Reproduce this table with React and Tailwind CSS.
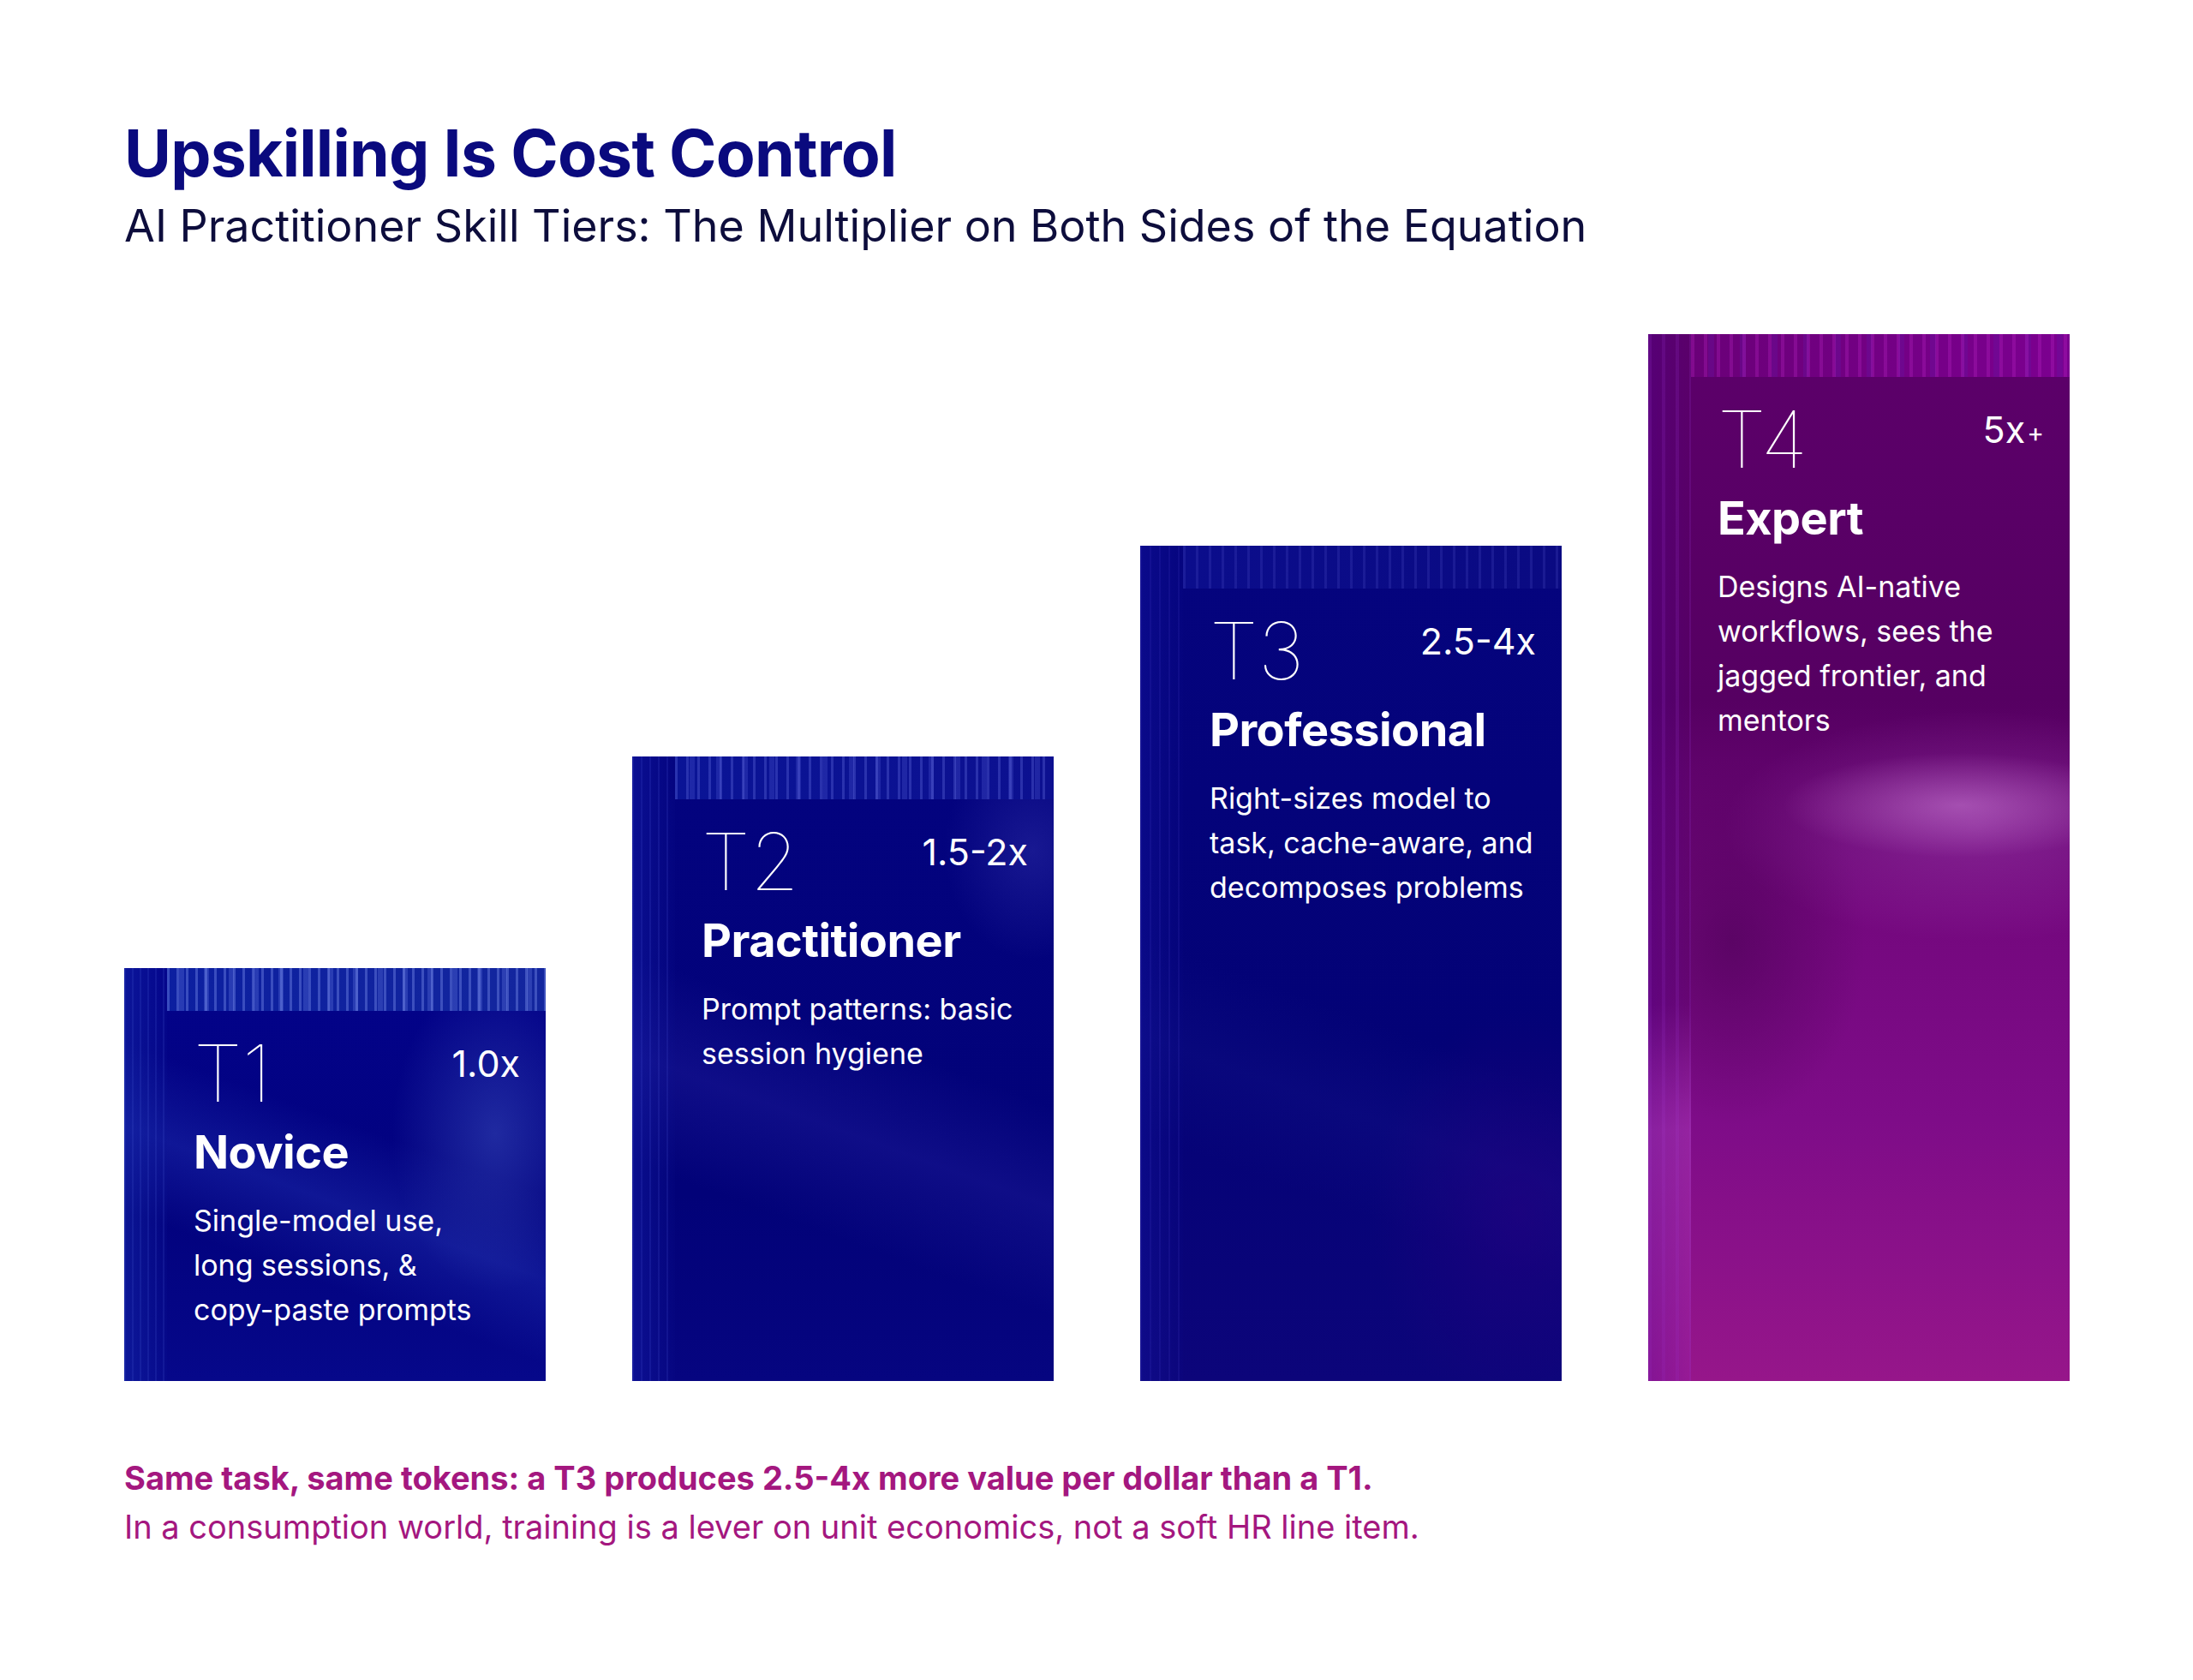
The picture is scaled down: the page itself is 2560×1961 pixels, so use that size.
import React from "react";

const tiers = [
  {
    id: "T1",
    mult: "1.0x",
    name: "Novice",
    lines: ["Single-model use,", "long sessions, &", "copy-paste prompts"],
    height: "h-[482px]",
    bg: "bg-[image:radial-gradient(ellipse_35%_55%_at_88%_40%,rgba(60,80,190,0.5),transparent_70%),linear-gradient(200deg,transparent_40%,rgba(40,60,190,0.35)_55%,transparent_70%),linear-gradient(180deg,#03038a_0%,#02027e_60%,#06088a_100%)]",
    band: "bg-[image:repeating-linear-gradient(90deg,rgba(150,170,255,0.32)_0px,rgba(150,170,255,0.32)_3px,transparent_3px,transparent_11px),repeating-linear-gradient(90deg,transparent_0px,transparent_14px,rgba(120,140,240,0.25)_14px,rgba(120,140,240,0.25)_20px,transparent_20px,transparent_29px),linear-gradient(90deg,#0c1fa0,#13269e)]",
    strip: "bg-[image:repeating-linear-gradient(90deg,rgba(70,90,210,0.18)_0px,rgba(70,90,210,0.18)_2px,transparent_2px,transparent_9px),linear-gradient(90deg,rgba(20,40,170,0.5),rgba(10,20,150,0.15))]",
  },
  {
    id: "T2",
    mult: "1.5-2x",
    name: "Practitioner",
    lines: ["Prompt patterns: basic", "session hygiene"],
    height: "h-[729px]",
    bg: "bg-[image:radial-gradient(ellipse_30%_25%_at_95%_15%,rgba(50,50,170,0.45),transparent_70%),linear-gradient(200deg,transparent_45%,rgba(45,40,170,0.3)_58%,transparent_72%),linear-gradient(180deg,#03037f_0%,#020278_70%,#060580_100%)]",
    band: "bg-[image:repeating-linear-gradient(90deg,rgba(120,130,240,0.28)_0px,rgba(120,130,240,0.28)_3px,transparent_3px,transparent_13px),repeating-linear-gradient(90deg,transparent_0px,transparent_17px,rgba(90,100,220,0.25)_17px,rgba(90,100,220,0.25)_23px,transparent_23px,transparent_31px),linear-gradient(90deg,#0a1496,#0c1090)]",
    strip: "bg-[image:repeating-linear-gradient(90deg,rgba(70,80,210,0.18)_0px,rgba(70,80,210,0.18)_2px,transparent_2px,transparent_10px),linear-gradient(90deg,rgba(20,30,170,0.45),rgba(10,15,140,0.1))]",
  },
  {
    id: "T3",
    mult: "2.5-4x",
    name: "Professional",
    lines: ["Right-sizes model to", "task, cache-aware, and", "decomposes problems"],
    height: "h-[975px]",
    bg: "bg-[image:radial-gradient(ellipse_50%_35%_at_90%_80%,rgba(40,0,130,0.55),transparent_70%),linear-gradient(200deg,transparent_55%,rgba(30,30,150,0.2)_65%,transparent_75%),linear-gradient(180deg,#05047e_0%,#030276_60%,#0c057a_100%)]",
    band: "bg-[image:repeating-linear-gradient(90deg,rgba(90,90,210,0.2)_0px,rgba(90,90,210,0.2)_3px,transparent_3px,transparent_15px),linear-gradient(90deg,#0b0d8c,#0a0a82)]",
    strip: "bg-[image:repeating-linear-gradient(90deg,rgba(70,60,200,0.15)_0px,rgba(70,60,200,0.15)_2px,transparent_2px,transparent_11px),linear-gradient(90deg,rgba(20,20,160,0.4),rgba(10,10,140,0.1))]",
  },
  {
    id: "T4",
    mult: "5x",
    plus: true,
    name: "Expert",
    lines: ["Designs AI-native", "workflows, sees the", "jagged frontier, and", "mentors"],
    height: "h-[1222px]",
    bg: "bg-[image:radial-gradient(ellipse_42%_5%_at_74%_45%,rgba(215,140,225,0.45),transparent_100%),radial-gradient(ellipse_60%_11%_at_78%_47%,rgba(180,90,200,0.35),transparent_100%),radial-gradient(ellipse_45%_25%_at_20%_58%,rgba(70,0,80,0.55),transparent_70%),linear-gradient(180deg,#5c006a_0%,#560062_35%,#74087e_55%,#7e0c88_75%,#96168a_100%)]",
    band: "bg-[image:repeating-linear-gradient(90deg,rgba(190,40,200,0.28)_0px,rgba(190,40,200,0.28)_4px,transparent_4px,transparent_15px),repeating-linear-gradient(90deg,transparent_0px,transparent_20px,rgba(100,20,160,0.35)_20px,rgba(100,20,160,0.35)_27px,transparent_27px,transparent_37px),linear-gradient(90deg,#6a0078,#7c0090)]",
    strip: "bg-[image:linear-gradient(180deg,transparent_0%,transparent_64%,rgba(200,80,210,0.35)_76%,rgba(170,40,180,0.3)_100%),repeating-linear-gradient(90deg,rgba(140,40,190,0.22)_0px,rgba(140,40,190,0.22)_4px,transparent_4px,transparent_16px),linear-gradient(90deg,rgba(80,0,130,0.5),rgba(80,0,110,0.1))]",
  },
];

function TierCard({ tier }) {
  return (
    <div className={`w-[492px] ${tier.height} ${tier.bg} flex text-white`}>
      <div className={`w-[50px] shrink-0 ${tier.strip}`} />
      <div className="flex flex-1 flex-col">
        <div className={`h-[50px] shrink-0 ${tier.band}`} />
        <div className="flex-1 pl-[31px] pr-[30px] pt-[27px]">
          <div className="flex justify-between items-start">
            <span className="text-[92px] leading-none font-thin">{tier.id}</span>
            <span className="mt-[13px] text-[43px] leading-none font-normal">
              {tier.mult}
              {tier.plus && <span className="text-[30px] align-middle ml-[2px]">+</span>}
            </span>
          </div>
          <div className="mt-[19px] text-[54px] leading-none font-bold tracking-[-0.01em]">
            {tier.name}
          </div>
          <div className="mt-[27px] text-[34px] leading-[52px] font-normal">
            {tier.lines.map((l) => (
              <div key={l} className="whitespace-nowrap">
                {l}
              </div>
            ))}
          </div>
        </div>
      </div>
    </div>
  );
}

export default function App() {
  return (
    <div className="w-[2560px] min-h-[1961px] bg-white pl-[145px] pt-[141px] font-['Inter',sans-serif]">
      <h1 className="text-[75px] leading-none font-bold text-[#0a0a7e] tracking-[-0.01em]">
        Upskilling Is Cost Control
      </h1>
      <p className="mt-[22px] text-[52px] leading-none text-[#0d0d3c]">
        AI Practitioner Skill Tiers: The Multiplier on Both Sides of the Equation
      </p>

      <div className="mt-[100px] flex items-end gap-[101px]">
        {tiers.map((t) => (
          <TierCard key={t.id} tier={t} />
        ))}
      </div>

      <div className="mt-[94px] text-[#a4177f]">
        <p className="text-[38px] leading-none font-bold">
          Same task, same tokens: a T3 produces 2.5-4x more value per dollar than a T1.
        </p>
        <p className="mt-[19px] text-[38px] leading-none font-normal">
          In a consumption world, training is a lever on unit economics, not a soft HR line item.
        </p>
      </div>
    </div>
  );
}
